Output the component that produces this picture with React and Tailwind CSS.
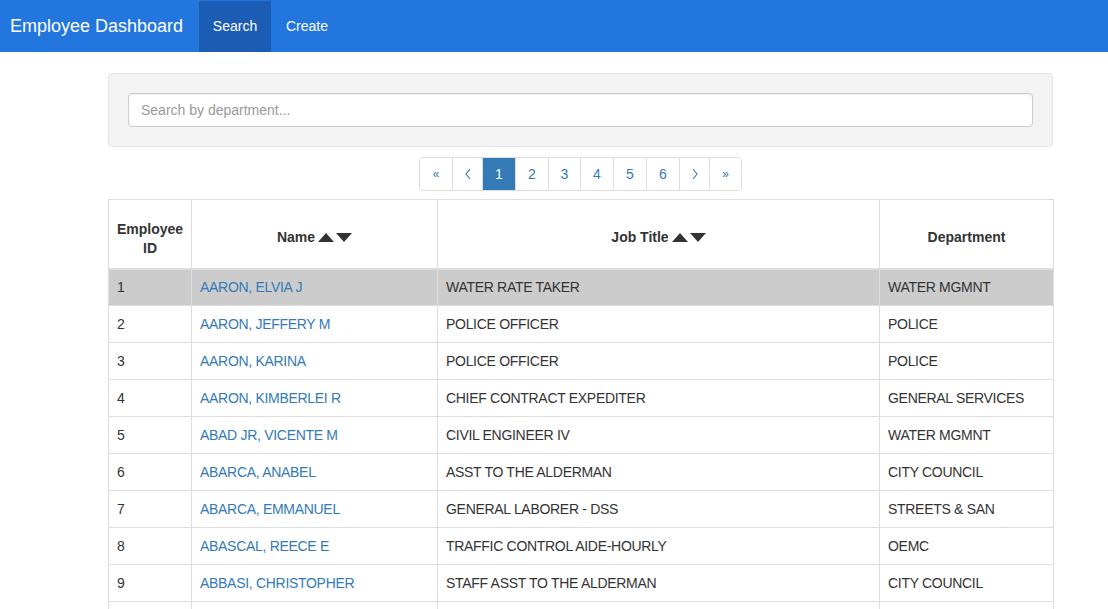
import React from "react";

const rows = [
  [1, "AARON, ELVIA J", "WATER RATE TAKER", "WATER MGMNT"],
  [2, "AARON, JEFFERY M", "POLICE OFFICER", "POLICE"],
  [3, "AARON, KARINA", "POLICE OFFICER", "POLICE"],
  [4, "AARON, KIMBERLEI R", "CHIEF CONTRACT EXPEDITER", "GENERAL SERVICES"],
  [5, "ABAD JR, VICENTE M", "CIVIL ENGINEER IV", "WATER MGMNT"],
  [6, "ABARCA, ANABEL", "ASST TO THE ALDERMAN", "CITY COUNCIL"],
  [7, "ABARCA, EMMANUEL", "GENERAL LABORER - DSS", "STREETS & SAN"],
  [8, "ABASCAL, REECE E", "TRAFFIC CONTROL AIDE-HOURLY", "OEMC"],
  [9, "ABBASI, CHRISTOPHER", "STAFF ASST TO THE ALDERMAN", "CITY COUNCIL"],
  ["", "", "", ""],
];

function Arrows() {
  return (
    <span className="inline-flex items-center gap-[2px] ml-[3px] align-middle">
      <svg width="16" height="9" viewBox="0 0 16 9"><polygon points="8,0 16,9 0,9" fill="#333" /></svg>
      <svg width="16" height="9" viewBox="0 0 16 9"><polygon points="0,0 16,0 8,9" fill="#333" /></svg>
    </span>
  );
}

function Chevron({ dir }) {
  return (
    <svg width="6" height="12" viewBox="0 0 6 12">
      <polyline
        points={dir === "left" ? "5,1 1,6 5,11" : "1,1 5,6 1,11"}
        fill="none"
        stroke="#337ab7"
        strokeWidth="1.1"
      />
    </svg>
  );
}

const pages = [
  { l: "«", w: "w-[32px]", s: "text-[12px]" },
  { l: <Chevron dir="left" />, w: "w-[30px]" },
  { l: "1", w: "w-[33px]", a: true },
  { l: "2", w: "w-[33px]" },
  { l: "3", w: "w-[32px]" },
  { l: "4", w: "w-[33px]" },
  { l: "5", w: "w-[33px]" },
  { l: "6", w: "w-[33px]" },
  { l: <Chevron dir="right" />, w: "w-[30px]" },
  { l: "»", w: "w-[32px]", s: "text-[12px]" },
];

export default function App() {
  return (
    <div className="min-h-[609px] bg-white text-[14px] text-[#333]" style={{ fontFamily: '"Liberation Sans", Arial, sans-serif' }}>
      <nav className="h-[52px] bg-[#2276dd] flex items-stretch">
        <div className="pl-[10px] pr-[15px] flex items-center text-white text-[18px] w-[199px]">Employee Dashboard</div>
        <a className="mt-[1px] w-[72px] bg-[#1b5db5] text-white flex items-center justify-center text-[14px]">Search</a>
        <a className="mt-[1px] w-[72px] text-white flex items-center justify-center text-[14px]">Create</a>
      </nav>
      <div className="w-[945px] ml-[108px]">
        <div className="mt-[21px] bg-[#f3f3f3] border border-[#e3e3e3] rounded-[4px] px-[19px] pt-[19px] h-[74px]">
          <div className="h-[34px] bg-white border border-[#ccc] rounded-[4px] flex items-center px-[12px] text-[#999] shadow-[inset_0_1px_1px_rgba(0,0,0,0.075)]">
            Search by department...
          </div>
        </div>
        <div className="flex justify-center mt-[10px]">
          <div className="flex border border-[#ddd] rounded-[4px] overflow-hidden h-[34px]">
            {pages.map((p, i) => (
              <div
                key={i}
                className={`${p.w} flex items-center justify-center ${i > 0 ? "border-l border-[#ddd]" : ""} ${p.a ? "bg-[#337ab7] text-white border-[#337ab7]" : "text-[#337ab7] bg-white"} ${p.s || "text-[14px]"}`}
              >
                {p.l}
              </div>
            ))}
          </div>
        </div>
        <table className="mt-[8px] w-[945px] border-collapse table-fixed border border-[#ddd]">
          <colgroup>
            <col className="w-[83px]" />
            <col className="w-[246px]" />
            <col className="w-[442px]" />
            <col className="w-[174px]" />
          </colgroup>
          <thead>
            <tr className="h-[69px]">
              <th className="border border-[#ddd] border-b-2 px-[8px] pb-[10px] font-bold text-center leading-[19px] align-bottom">Employee ID</th>
              <th className="border border-[#ddd] border-b-2 px-[8px] pb-[21px] font-bold text-center leading-[20px] align-bottom">Name<Arrows /></th>
              <th className="border border-[#ddd] border-b-2 px-[8px] pb-[21px] font-bold text-center leading-[20px] align-bottom">Job Title<Arrows /></th>
              <th className="border border-[#ddd] border-b-2 px-[8px] pb-[21px] font-bold text-center leading-[20px] align-bottom">Department</th>
            </tr>
          </thead>
          <tbody>
            {rows.map((r, i) => (
              <tr key={i} className={`h-[37px] ${i === 0 ? "bg-[#cccccc]" : "bg-white"}`}>
                <td className="border border-[#ddd] px-[8px]">{r[0]}</td>
                <td className="border border-[#ddd] px-[8px] text-[#337ab7] tracking-[-0.3px]">{r[1]}</td>
                <td className="border border-[#ddd] px-[8px] tracking-[-0.3px]">{r[2]}</td>
                <td className="border border-[#ddd] px-[8px] tracking-[-0.3px]">{r[3]}</td>
              </tr>
            ))}
          </tbody>
        </table>
      </div>
    </div>
  );
}
